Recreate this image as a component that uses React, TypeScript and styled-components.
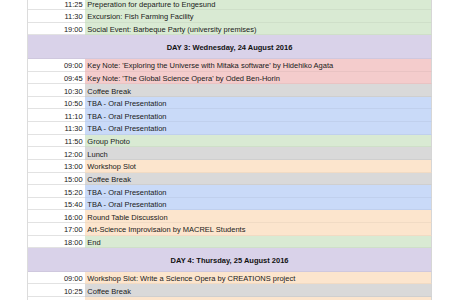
import React from "react";
import styled, { createGlobalStyle } from "styled-components";

const GlobalStyle = createGlobalStyle`
  html, body { margin: 0; padding: 0; background: #ffffff; }
  body { font-family: "Liberation Sans", Arial, sans-serif; overflow: hidden; }
`;

type Tone = "green" | "purple" | "red" | "gray" | "blue" | "orange";

const tones: Record<Tone, string> = {
  green: "#d9ead3",
  purple: "#d9d2e9",
  red: "#f4cccc",
  gray: "#d9d9d9",
  blue: "#c9daf8",
  orange: "#fce5cd",
};

const Page = styled.div`
  width: 460px;
  height: 300px;
  overflow: hidden;
  padding-left: 27px;
  box-sizing: border-box;
`;

const Sheet = styled.div`
  width: 405px;
  margin-top: -2.6px;
  display: flex;
  flex-direction: column;
  border-left: 1px solid #dcdcdc;
  box-sizing: border-box;
`;

const Row = styled.div`
  display: grid;
  grid-template-columns: 57px 1fr;
  height: 12.63px;
`;

const TimeCell = styled.div`
  box-sizing: border-box;
  border-bottom: 1px solid #e2e2e2;
  background: #ffffff;
  color: #1a1a1a;
  font-size: 7.5px;
  text-align: right;
  padding: 2.2px 2.3px 0 0;
  display: flex;
  align-items: center;
  justify-content: flex-end;
  white-space: nowrap;
`;

const EventCell = styled.div<{ $tone: Tone }>`
  box-sizing: border-box;
  background: ${(p) => tones[p.$tone]};
  border-bottom: 1px solid rgba(0, 0, 0, 0.045);
  border-right: 1px solid #d6d6d6;
  color: #1a1a1a;
  font-size: 7.5px;
  padding: 2.2px 0 0 2.3px;
  display: flex;
  align-items: center;
  white-space: nowrap;
  overflow: hidden;
`;

const DayHeader = styled.div`
  box-sizing: border-box;
  height: 23.6px;
  background: ${tones.purple};
  border-bottom: 1px solid rgba(0, 0, 0, 0.045);
  border-right: 1px solid #d6d6d6;
  color: #111111;
  font-size: 7.5px;
  font-weight: 700;
  display: flex;
  align-items: center;
  justify-content: center;
  padding-top: 1px;
  white-space: nowrap;
`;

type Item =
  | { kind: "event"; time: string; text: string; tone: Tone }
  | { kind: "day"; text: string };

const items: Item[] = [
  { kind: "event", time: "11:25", text: "Preperation for departure to Engesund", tone: "green" },
  { kind: "event", time: "11:30", text: "Excursion: Fish Farming Facility", tone: "green" },
  { kind: "event", time: "19:00", text: "Social Event: Barbeque Party (university premises)", tone: "green" },
  { kind: "day", text: "DAY 3: Wednesday, 24 August 2016" },
  { kind: "event", time: "09:00", text: "Key Note: 'Exploring the Universe with Mitaka software' by Hidehiko Agata", tone: "red" },
  { kind: "event", time: "09:45", text: "Key Note: 'The Global Science Opera' by Oded Ben-Horin", tone: "red" },
  { kind: "event", time: "10:30", text: "Coffee Break", tone: "gray" },
  { kind: "event", time: "10:50", text: "TBA - Oral Presentation", tone: "blue" },
  { kind: "event", time: "11:10", text: "TBA - Oral Presentation", tone: "blue" },
  { kind: "event", time: "11:30", text: "TBA - Oral Presentation", tone: "blue" },
  { kind: "event", time: "11:50", text: "Group Photo", tone: "green" },
  { kind: "event", time: "12:00", text: "Lunch", tone: "gray" },
  { kind: "event", time: "13:00", text: "Workshop Slot", tone: "orange" },
  { kind: "event", time: "15:00", text: "Coffee Break", tone: "gray" },
  { kind: "event", time: "15:20", text: "TBA - Oral Presentation", tone: "blue" },
  { kind: "event", time: "15:40", text: "TBA - Oral Presentation", tone: "blue" },
  { kind: "event", time: "16:00", text: "Round Table Discussion", tone: "orange" },
  { kind: "event", time: "17:00", text: "Art-Science Improvisaion by MACREL Students", tone: "orange" },
  { kind: "event", time: "18:00", text: "End", tone: "green" },
  { kind: "day", text: "DAY 4: Thursday, 25 August 2016" },
  { kind: "event", time: "09:00", text: "Workshop Slot: Write a Science Opera by CREATIONS project", tone: "orange" },
  { kind: "event", time: "10:25", text: "Coffee Break", tone: "gray" },
  { kind: "event", time: "", text: "", tone: "orange" },
];

export default function App() {
  return (
    <>
      <GlobalStyle />
      <Page>
        <Sheet>
          {items.map((it, i) =>
            it.kind === "day" ? (
              <DayHeader key={i}>{it.text}</DayHeader>
            ) : (
              <Row key={i}>
                <TimeCell>{it.time}</TimeCell>
                <EventCell $tone={it.tone}>{it.text}</EventCell>
              </Row>
            )
          )}
        </Sheet>
      </Page>
    </>
  );
}
